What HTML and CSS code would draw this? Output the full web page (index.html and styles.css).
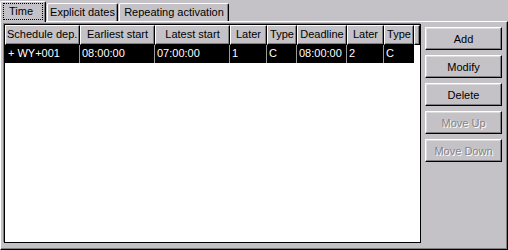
FILE: index.html
```html
<!DOCTYPE html>
<html>
<head>
<meta charset="utf-8">
<link rel="stylesheet" href="styles.css">
</head>
<body>
<div class="window">
  <div class="tabs">
    <div class="tab active"><span class="focus">Time</span></div>
    <div class="tab t2">Explicit dates</div>
    <div class="tab t3">Repeating activation</div>
  </div>
  <div class="panel">
    <div class="list">
      <div class="header">
        <div class="hcell w75 left">Schedule dep.</div>
        <div class="hcell w75">Earliest start</div>
        <div class="hcell w75">Latest start</div>
        <div class="hcell w37">Later</div>
        <div class="hcell w30">Type</div>
        <div class="hcell w50">Deadline</div>
        <div class="hcell w37">Later</div>
        <div class="hcell w30">Type</div>
        <div class="hcell fill"></div>
      </div>
      <div class="row selected">
        <div class="cell w75 first">+ WY+001</div>
        <div class="cell w75">08:00:00</div>
        <div class="cell w75">07:00:00</div>
        <div class="cell w37">1</div>
        <div class="cell w30">C</div>
        <div class="cell w50">08:00:00</div>
        <div class="cell w37">2</div>
        <div class="cell w30 last">C</div>
      </div>
    </div>
    <div class="buttons">
      <button class="btn">Add</button>
      <button class="btn">Modify</button>
      <button class="btn">Delete</button>
      <button class="btn disabled">Move Up</button>
      <button class="btn disabled">Move Down</button>
    </div>
  </div>
</div>
</body>
</html>
```
FILE: styles.css
```css
* { box-sizing: border-box; }
html, body { margin: 0; padding: 0; }
body {
  background: #c4c2c6;
  font-family: "Liberation Sans", Arial, sans-serif;
  font-size: 11px;
  color: #000;
}
.window {
  width: 508px;
  height: 250px;
  background: #c4c2c6;
  overflow: hidden;
}
.tabs {
  display: flex;
  align-items: flex-end;
  height: 21px;
}
.tab {
  height: 18px;
  border-top: 1px solid #fff;
  border-left: 1px solid #fff;
  border-right: 1px solid #000;
  box-shadow: inset -1px 0 0 #808080;
  border-radius: 2px 2px 0 0;
  padding: 2px 0 0 0;
  text-align: center;
  line-height: 13px;
  margin-right: 1px;
  white-space: nowrap;
}
.tab.active {
  width: 46px;
  height: 21px;
  margin-bottom: -1px;
  position: relative;
  z-index: 1;
  background: #c4c2c6;
  padding: 1px 2px 2px 2px;
  text-align: left;
}
.focus {
  display: block;
  height: 100%;
  outline: 1px dotted #000;
  outline-offset: -1px;
  padding: 2px 0 0 6px;
  line-height: 13px;
}
.t2 { width: 71px; }
.t3 { width: 110px; }
.panel {
  display: flex;
  align-items: flex-start;
  height: 229px;
  border-top: 1px solid #fff;
  border-left: 1px solid #fff;
  border-right: 1px solid #000;
  border-bottom: 1px solid #000;
  box-shadow: inset -1px -1px 0 #808080;
  padding: 2px 0 0 3px;
}
.list {
  width: 417px;
  height: 219px;
  border: 1px solid #000;
  box-shadow: -1px -1px 0 #808080;
  background: #fff;
  display: flex;
  flex-direction: column;
}
.header {
  display: flex;
  height: 20px;
}
.hcell {
  height: 20px;
  background: #c4c2c6;
  border-top: 1px solid #fff;
  border-left: 1px solid #fff;
  border-right: 1px solid #000;
  border-bottom: 1px solid #000;
  box-shadow: inset -1px -1px 0 #808080;
  text-align: center;
  line-height: 17px;
  white-space: nowrap;
  overflow: hidden;
}
.hcell.left { text-align: left; padding-left: 1px; }
.hcell.fill { flex: 1; }
.w75 { width: 75px; }
.w37 { width: 37px; }
.w30 { width: 30px; }
.w50 { width: 50px; }
.row {
  display: flex;
  height: 18px;
}
.row.selected .cell {
  background: #000;
  color: #fff;
}
.cell {
  height: 18px;
  line-height: 17px;
  padding-left: 2px;
  border-right: 1px solid #9a9a9a;
  white-space: nowrap;
}
.cell.first { padding-left: 3px; }
.cell.last { border-right: none; }
.buttons {
  display: flex;
  flex-direction: column;
  gap: 5px;
  margin: 3px 0 0 4px;
}
.btn {
  width: 77px;
  height: 23px;
  margin: 0;
  padding: 0;
  font-family: inherit;
  font-size: 11px;
  color: #000;
  background: #c4c2c6;
  border-top: 1px solid #fff;
  border-left: 1px solid #fff;
  border-right: 1px solid #000;
  border-bottom: 1px solid #000;
  box-shadow: inset -1px -1px 0 #808080, inset 1px 1px 0 #dcdcdc;
  border-radius: 0;
  text-align: center;
  line-height: 20px;
}
.btn.disabled {
  color: #858387;
  text-shadow: 1px 1px 0 #fff;
}
```
